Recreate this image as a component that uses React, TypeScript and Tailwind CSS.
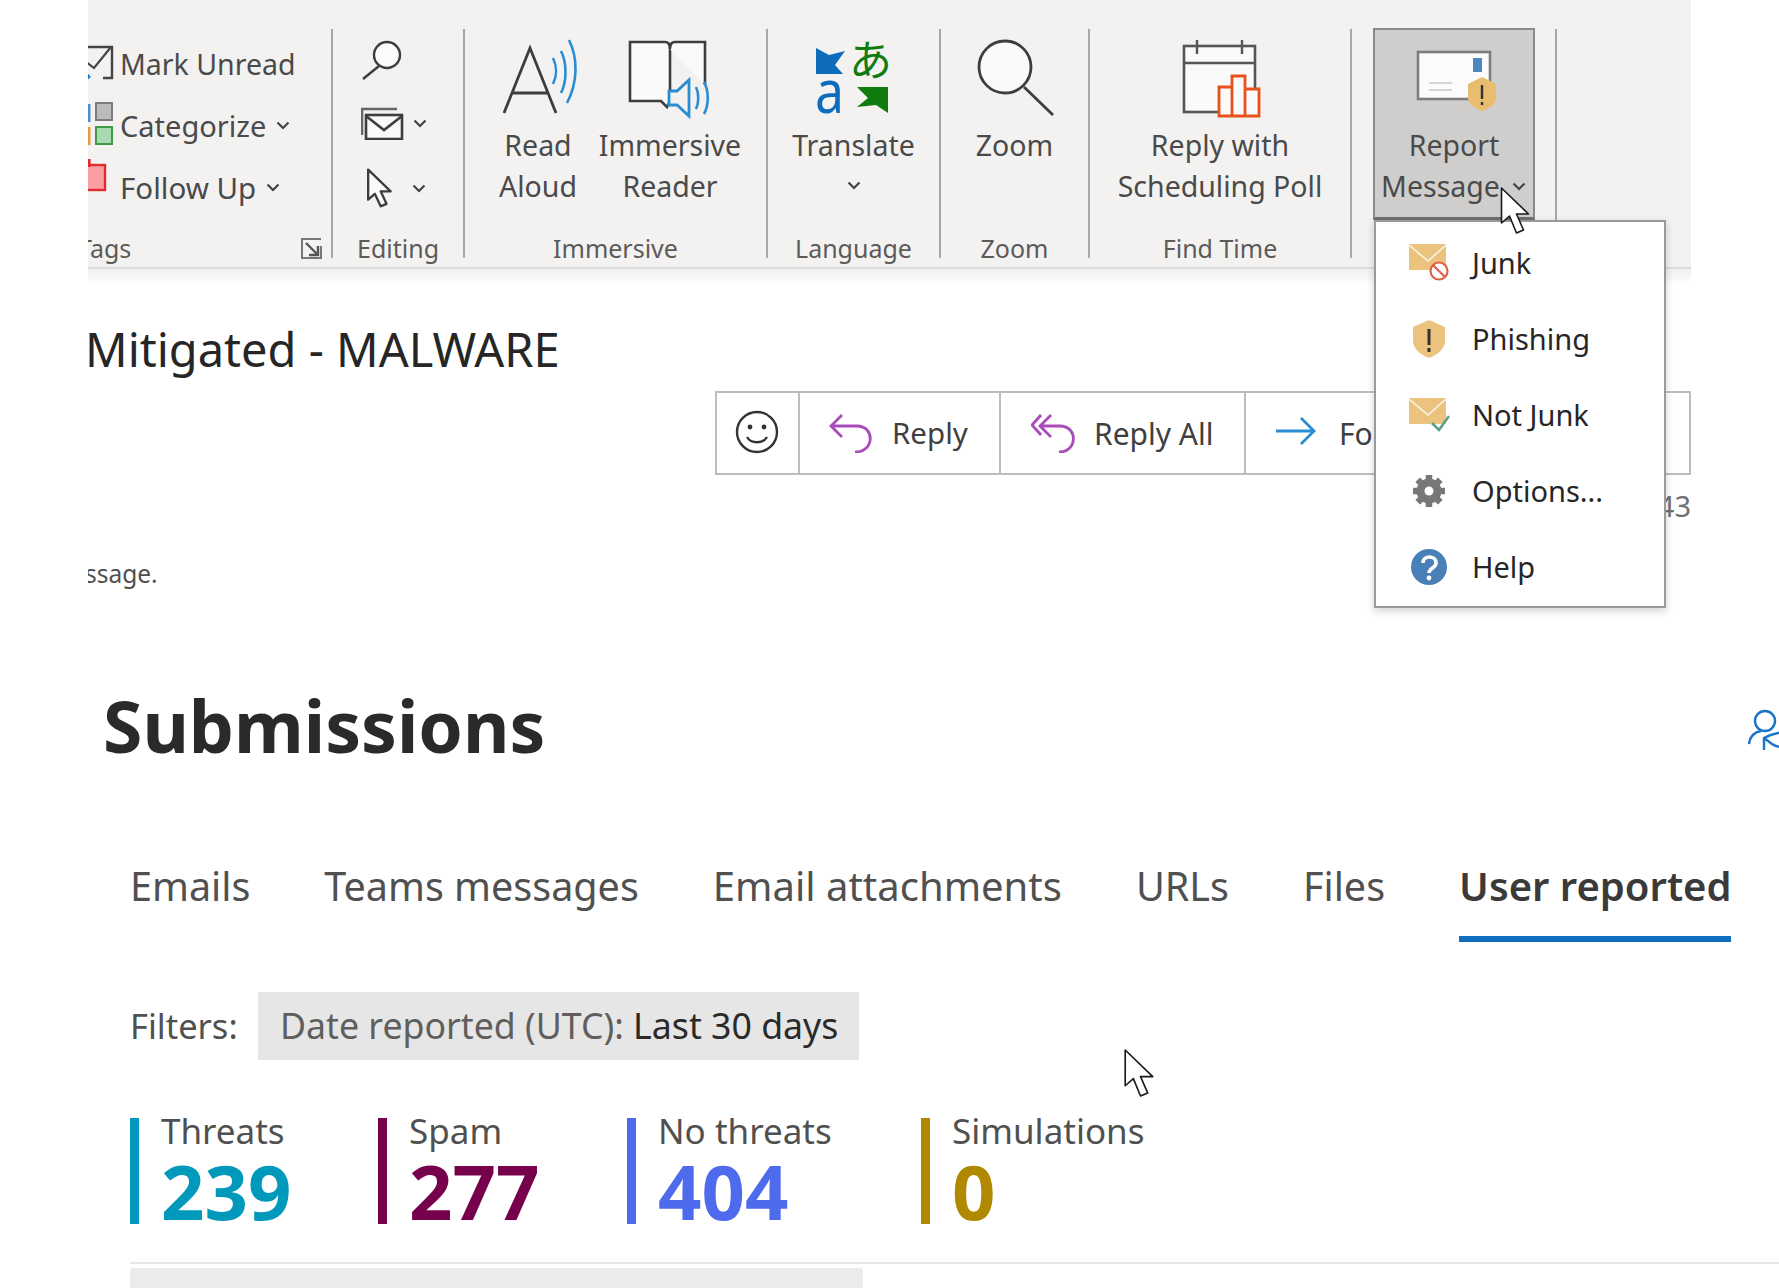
import React from "react";

const Chev = ({ className = "" }: { className?: string }) => (
  <svg width="16" height="11" viewBox="0 0 16 11" className={"block shrink-0 " + className} fill="none" stroke="#444" strokeWidth="2.2">
    <path d="M2.5 2.5 8 8 13.5 2.5" />
  </svg>
);

const Group = ({ w, label, children, labelClass = "text-center" }: { w: string; label?: string; children: React.ReactNode; labelClass?: string }) => (
  <div className={"relative flex flex-col h-[229px] shrink-0 border-r-2 border-[#a8a7a6] " + w}>
    <div className="flex-1 flex min-h-0">{children}</div>
    <div className={"h-[18px] leading-[16px] text-[25px] text-[#5c5b5a] whitespace-nowrap " + labelClass}>{label}</div>
  </div>
);

const Big = ({ w, icon, lines, chev, inlineChev, cls = "" }: { w: string; icon: React.ReactNode; lines: string[]; chev?: boolean; inlineChev?: boolean; cls?: string }) => (
  <div className={"flex flex-col items-center shrink-0 " + w + " " + cls}>
    <div className="h-[96px] w-full flex justify-center shrink-0">{icon}</div>
    {lines.map((l, i) => (
      <div key={l} className="h-[41px] flex items-center leading-[41px] text-[28.5px] text-[#4a4a4a] whitespace-nowrap">
        {l}
        {inlineChev && i === lines.length - 1 && <Chev className="ml-[11px]" />}
      </div>
    ))}
    {chev && <Chev className="mt-[14px]" />}
  </div>
);

const TagRow = ({ icon, text, chevClass, size = "text-[28.5px]" }: { icon: React.ReactNode; text: string; chevClass?: string; size?: string }) => (
  <div className="h-[62px] flex items-center">
    <div className="w-[32px] h-[62px] shrink-0 overflow-hidden">{icon}</div>
    <span className={"text-[#4a4a4a] whitespace-nowrap " + size}>{text}</span>
    {chevClass && <Chev className={chevClass} />}
  </div>
);

const Cursor = ({ className, w, h }: { className: string; w: number; h: number }) => (
  <svg width={w} height={h} viewBox="0 0 32 48" className={className} fill="#fff" stroke="#1a1a1a" strokeWidth="1.6" strokeLinejoin="round">
    <path d="M2 1v35l8-7 7 17 7-3-7-16h12z" />
  </svg>
);

const MenuItem = ({ icon, text }: { icon: React.ReactNode; text: string }) => (
  <div className="h-[76px] flex items-center">
    <div className="w-[96px] h-[50px] shrink-0 flex items-center justify-center pl-[10px]">{icon}</div>
    <span className="text-[29px] text-[#262626] whitespace-nowrap">{text}</span>
  </div>
);

const Stat = ({ label, value, bar, text, w }: { label: string; value: string; bar: string; text: string; w: string }) => (
  <div className={"flex h-[106px] shrink-0 " + w}>
    <div className={"w-[9px] h-full shrink-0 " + bar} />
    <div className="pl-[22px] flex flex-col">
      <div className="h-[26px] leading-[26px] text-[35px] text-[#505050] whitespace-nowrap">{label}</div>
      <div className={"mt-[17px] h-[60px] leading-[60px] text-[76px] font-bold " + text}>{value}</div>
    </div>
  </div>
);

export default function App() {
  return (
    <div className="relative w-[1779px] h-[1288px] overflow-hidden bg-white font-['Noto_Sans',sans-serif]">
      <div className="ml-[88px] w-[1603px] overflow-hidden h-[589px]">
        {/* Ribbon */}
        <div className="h-[269px] pt-[29px] bg-[#f3f2f1] border-b-2 border-[#dcdcdc] flex">
          <Group w="w-[245px]" label="Tags" labelClass="text-left -ml-[10px]">
            <div className="flex flex-col pt-[4px]">
              <TagRow
                text="Mark Unread"
                icon={
                  <svg width="32" height="62" viewBox="0 0 32 62" fill="none">
                    <path d="M0 14H24V45H15" stroke="#444" strokeWidth="2.4" />
                    <path d="M-3 28 6 35 23 14" stroke="#444" strokeWidth="2.2" />
                    <path d="M-3 37 3 44-3 49z" fill="#1b87d4" />
                  </svg>
                }
              />
              <TagRow
                text="Categorize"
                size="text-[29px]"
                chevClass="ml-[9px] -mt-[2px]"
                icon={
                  <svg width="32" height="62" viewBox="0 0 32 62">
                    <rect x="0" y="9" width="2.5" height="18" fill="#4a90d0" />
                    <rect x="0" y="32" width="2.5" height="18" fill="#e89a3c" />
                    <rect x="8" y="8" width="16" height="17" fill="#bdbbb9" stroke="#7d7d7d" strokeWidth="2" />
                    <rect x="8" y="32" width="16" height="17" fill="#a9d9ae" stroke="#3c9a48" strokeWidth="2" />
                  </svg>
                }
              />
              <TagRow
                text="Follow Up"
                size="text-[29.5px]"
                chevClass="ml-[9px] -mt-[2px]"
                icon={
                  <svg width="32" height="62" viewBox="0 0 32 62">
                    <rect x="-4" y="8" width="21" height="25" fill="#fb9ea4" stroke="#e02b2f" strokeWidth="2.4" />
                    <rect x="0" y="2" width="2.6" height="8" fill="#e02b2f" />
                  </svg>
                }
              />
            </div>
            <svg width="22" height="21" viewBox="0 0 22 21" className="absolute left-[213px] top-[209px]" fill="none" stroke="#555" strokeWidth="2">
              <path d="M20 8V20H1V1H20" stroke="#777" />
              <path d="M5 5 17 17M17 8V17H8" strokeWidth="2.4" />
            </svg>
          </Group>

          <Group w="w-[132px]" label="Editing">
            <div className="flex flex-col pl-[28px]">
              <svg width="42" height="41" viewBox="0 0 42 41" className="block mt-[10px]" fill="none" stroke="#3d3d3d" strokeWidth="2.4">
                <circle cx="26" cy="16" r="13" fill="#fbfbfb" />
                <path d="M18 27 2 40" />
              </svg>
              <div className="flex items-center mt-[27px] h-[33px]">
                <svg width="44" height="33" viewBox="0 0 44 33" className="block" fill="none" stroke="#3d3d3d" strokeWidth="2.6">
                  <path d="M1 28V2H36" stroke="#666" />
                  <rect x="5" y="8" width="36" height="24" fill="#fafafa" />
                  <path d="M5 9 23 23 41 9" />
                </svg>
                <Chev className="ml-[7px]" />
              </div>
              <div className="flex items-center mt-[28px] h-[40px]">
                <svg width="32" height="40" viewBox="0 0 32 48" className="block ml-[2px]" fill="#fafafa" stroke="#3d3d3d" strokeWidth="2.8" strokeLinejoin="round">
                  <path d="M3 2v36l8-7 7 15 7-3-7-15h12z" />
                </svg>
                <Chev className="ml-[16px]" />
              </div>
            </div>
          </Group>

          <Group w="w-[303px]" label="Immersive">
            <div className="flex pl-[33px] gap-[19px]">
              <Big
                w="w-[80px]"
                lines={["Read", "Aloud"]}
                icon={
                  <svg width="80" height="96" viewBox="0 0 80 96" fill="none" className="block">
                    <path d="M6 84 32 19 58 84M14 64H50" stroke="#3d3d3d" strokeWidth="2.8" />
                    <path d="M55 29c4 8 4 18 0 26M63 22c6 12 6 30 0 42M71 11c9 18 9 42-2 63" stroke="#2a8dd4" strokeWidth="2.6" />
                  </svg>
                }
              />
              <Big
                w="w-[146px]"
                lines={["Immersive", "Reader"]}
                icon={
                  <svg width="146" height="96" viewBox="0 0 146 96" fill="none" className="block">
                    <path d="M33 13H68C72 13 73 16 73 20V70C73 73 71 76 70 78L64 72H33z" fill="#fafafa" stroke="#3d3d3d" strokeWidth="2.6" />
                    <path d="M73 20C73 16 74 13 78 13H108V56" fill="#fafafa" stroke="#3d3d3d" strokeWidth="2.6" />
                    <path d="M72 62H80L92 51V87L80 76H72z" fill="#f3f2f1" stroke="#2a8dd4" strokeWidth="2.8" />
                    <path d="M99 58c3 6 3 16 0 22M107 53c5 9 5 23 0 32" stroke="#2a8dd4" strokeWidth="2.6" />
                  </svg>
                }
              />
            </div>
          </Group>

          <Group w="w-[173px]" label="Language">
            <div className="flex-1">
              <Big
                w="w-full"
                chev
                lines={["Translate"]}
                icon={
                  <svg width="76" height="96" viewBox="0 0 76 96" className="block">
                    <path d="M0 19 13 26 29 22 19 36 27 45H0z" fill="#0f6cbd" />
                    <text x="33" y="47" fontSize="43" fill="#107c10" fontFamily="'Noto Sans CJK JP',sans-serif">あ</text>
                    <text x="-1" y="84" fontSize="60" fill="#0f6cbd" textLength="29" lengthAdjust="spacingAndGlyphs" fontFamily="'Noto Sans',sans-serif">a</text>
                    <path d="M72 58V84L60 76 41 78 52 69 41 58z" fill="#107c10" />
                  </svg>
                }
              />
            </div>
          </Group>

          <Group w="w-[149px]" label="Zoom">
            <div className="flex-1">
              <Big
                w="w-full"
                lines={["Zoom"]}
                icon={
                  <svg width="78" height="96" viewBox="0 0 78 96" fill="none" className="block ml-[3px]" stroke="#3d3d3d" strokeWidth="2.8">
                    <circle cx="28" cy="38" r="26" fill="#fafafa" />
                    <path d="M47 58 76 86" />
                  </svg>
                }
              />
            </div>
          </Group>

          <Group w="w-[262px]" label="Find Time">
            <div className="flex-1">
              <Big
                w="w-full"
                lines={["Reply with", "Scheduling Poll"]}
                icon={
                  <svg width="80" height="96" viewBox="0 0 80 96" fill="none" className="block ml-[4px]">
                    <rect x="2" y="17" width="71" height="66" fill="#fafafa" stroke="#555" strokeWidth="2.6" />
                    <path d="M2 34H73M15 11V25M60 11V25" stroke="#555" strokeWidth="2.4" />
                    <path d="M37 87V58H50V47H63V60H77V87zM50 58V87M63 60V87" fill="#fafafa" stroke="#e8501c" strokeWidth="2.8" />
                  </svg>
                }
              />
            </div>
          </Group>

          <Group w="w-[205px]">
            <div className="pl-[21px]">
              <div className="h-[192px] -mt-[1px] border-2 border-[#8b8a8a] border-b-[3px] border-b-[#6f6f6f] bg-[#cfcecd]">
                <Big
                  w="w-[158px]"
                  lines={["Report", "Message"]}
                  inlineChev
                  cls="-mt-[1px]"
                  icon={
                    <svg width="84" height="96" viewBox="0 0 84 96" fill="none" className="block mt-[1px]">
                      <rect x="6" y="22" width="72" height="47" fill="#fbfbfb" stroke="#7d7d7d" strokeWidth="2.6" />
                      <rect x="61" y="28" width="9" height="14" fill="#4a86c0" />
                      <path d="M17 53H40M17 60H40" stroke="#d5d5d5" strokeWidth="2" />
                      <path d="M70 47 84 54V68C84 74 77 79 70 81 63 79 56 74 56 68V54z" fill="#e9bd6f" />
                      <path d="M70 55V69M70 72V75" stroke="#333" strokeWidth="2.4" />
                    </svg>
                  }
                />
              </div>
            </div>
          </Group>
        </div>
        <div className="h-[16px] bg-gradient-to-b from-[#f0f0f0] to-white -mb-[16px]" />

        {/* Message head */}
        <div className="mt-[55px] h-[50px] leading-[50px] text-[47px] text-[#262626] whitespace-nowrap -ml-[3px]">Mitigated - MALWARE</div>

        <div className="mt-[17px] ml-[627px] h-[84px] w-[976px] border-2 border-[#bdbdbd] flex items-stretch">
          <div className="w-[83px] shrink-0 border-r-2 border-[#bdbdbd] flex items-center justify-center">
            <svg width="44" height="44" viewBox="0 0 44 44" fill="none" stroke="#333" strokeWidth="2.4" className="-ml-[2px] -mt-[2px]">
              <circle cx="22" cy="22" r="20" />
              <circle cx="15" cy="17" r="2.4" fill="#333" stroke="none" />
              <circle cx="29" cy="17" r="2.4" fill="#333" stroke="none" />
              <path d="M12 27c4 7 16 7 20 0" />
            </svg>
          </div>
          <div className="w-[201px] shrink-0 border-r-2 border-[#bdbdbd] flex items-center pl-[29px]">
            <svg width="44" height="40" viewBox="0 0 44 40" fill="none" stroke="#a94bb8" strokeWidth="2.8" className="shrink-0">
              <path d="M13 2 2 13 13 24M2 13H28C46 13 46 39 26 39" />
            </svg>
            <span className="ml-[19px] text-[29.5px] text-[#3f3f3f]">Reply</span>
          </div>
          <div className="w-[245px] shrink-0 border-r-2 border-[#bdbdbd] flex items-center pl-[30px]">
            <svg width="44" height="40" viewBox="0 0 44 40" fill="none" stroke="#a94bb8" strokeWidth="2.8" className="shrink-0">
              <path d="M10 2 1 12 10 22M20 2 9 13 20 24M9 13H29C47 13 47 39 28 39" />
            </svg>
            <span className="ml-[19px] text-[30px] text-[#3f3f3f] whitespace-nowrap">Reply All</span>
          </div>
          <div className="flex-1 flex items-center pl-[30px] relative">
            <svg width="40" height="30" viewBox="0 0 40 30" fill="none" stroke="#2a8dd4" strokeWidth="2.8" className="shrink-0 -mt-[4px]">
              <path d="M0 15H38M25 2 38 15 25 28" />
            </svg>
            <span className="ml-[23px] text-[30px] text-[#3f3f3f]">Forward</span>
            <span className="absolute right-[24px] top-[36px] w-[3px] h-[3px] bg-[#666]" />
          </div>
        </div>

        <div className="mt-[16px] h-[30px] leading-[30px] text-right text-[29px] text-[#707070] whitespace-nowrap">12:43</div>
        <div className="mt-[38px] h-[30px] leading-[30px] text-[24.5px] text-[#505050] whitespace-nowrap -ml-[3px]">ssage.</div>
      </div>

      {/* Submissions */}
      <div className="mt-[97px] h-[80px] flex items-center justify-between pl-[103px]">
        <h1 className="text-[71.5px] leading-[80px] font-bold text-[#2b2a29]">Submissions</h1>
        <svg width="44" height="44" viewBox="0 0 44 44" fill="none" stroke="#1a73c9" strokeWidth="2.4" className="shrink-0 -mr-[13px] mt-[8px]">
          <circle cx="17" cy="13" r="10" />
          <path d="M1 36C2 28 7 24 13 23" />
          <path d="M16 42V30C24 26 32 24 40 24M16 30 24 36C30 40 36 40 44 38" />
        </svg>
      </div>

      <div className="mt-[100px] ml-[130px] flex h-[76px] gap-[74px]">
        <div className="h-[40px] leading-[40px] text-[39.5px] text-[#505050] whitespace-nowrap">Emails</div>
        <div className="h-[40px] leading-[40px] text-[39.5px] text-[#505050] whitespace-nowrap">Teams messages</div>
        <div className="h-[40px] leading-[40px] text-[40px] text-[#505050] whitespace-nowrap">Email attachments</div>
        <div className="h-[40px] leading-[40px] text-[39.5px] text-[#505050] whitespace-nowrap">URLs</div>
        <div className="h-[40px] leading-[40px] text-[39.5px] text-[#505050] whitespace-nowrap">Files</div>
        <div className="w-[272px] h-[76px] border-b-[6px] border-[#106ebe] leading-[40px] text-[40px] font-semibold text-[#3b3a39] whitespace-nowrap">User reported</div>
      </div>

      <div className="mt-[50px] ml-[130px] h-[68px] flex items-center">
        <span className="text-[34.5px] text-[#505050] w-[128px]">Filters:</span>
        <div className="h-[68px] w-[601px] bg-[#e6e6e6] pl-[22px] flex items-center text-[35.7px] whitespace-nowrap">
          <span className="text-[#605e5c]">Date reported (UTC):&nbsp;</span>
          <span className="text-[#2b2a29]">Last 30 days</span>
        </div>
      </div>

      <div className="mt-[58px] ml-[130px] flex">
        <Stat w="w-[248px]" label="Threats" value="239" bar="bg-[#0099bc]" text="text-[#0099bc]" />
        <Stat w="w-[249px]" label="Spam" value="277" bar="bg-[#77004d]" text="text-[#77004d]" />
        <Stat w="w-[294px]" label="No threats" value="404" bar="bg-[#4f6bed]" text="text-[#4f6bed]" />
        <Stat w="w-[280px]" label="Simulations" value="0" bar="bg-[#b08900]" text="text-[#b08900]" />
      </div>

      <div className="mt-[38px] ml-[130px] h-[2px] bg-[#e6e6e6]" />
      <div className="mt-[4px] ml-[130px] w-[733px] h-[24px] rounded-t-[3px] bg-[#ebebeb]" />

      {/* Report Message dropdown */}
      <div className="absolute left-[1374px] top-[220px] w-[292px] h-[388px] bg-white border-2 border-[#9a9a9a] shadow-[0_3px_8px_rgba(0,0,0,0.18)] pt-[3px]">
        <MenuItem
          text="Junk"
          icon={
            <svg width="42" height="40" viewBox="0 0 42 40">
              <rect x="1" y="1" width="37" height="26" fill="#ebc37e" />
              <path d="M1 2 20 18 38 2" fill="none" stroke="#fdf6e6" strokeWidth="1.6" />
              <circle cx="31" cy="28" r="8.5" fill="#fff" stroke="#e0604a" strokeWidth="2.2" />
              <path d="M25 22 37 34" stroke="#e0604a" strokeWidth="2.2" />
            </svg>
          }
        />
        <MenuItem
          text="Phishing"
          icon={
            <svg width="32" height="38" viewBox="0 0 32 38">
              <path d="M16 0 32 7V21C32 29 24 35 16 38 8 35 0 29 0 21V7z" fill="#ebc37e" />
              <path d="M16 9V25M16 28V32" stroke="#333" strokeWidth="3" />
            </svg>
          }
        />
        <MenuItem
          text="Not Junk"
          icon={
            <svg width="42" height="36" viewBox="0 0 42 36">
              <rect x="1" y="1" width="37" height="26" fill="#ebc37e" />
              <path d="M1 2 20 18 38 2" fill="none" stroke="#fdf6e6" strokeWidth="1.6" />
              <path d="M24 26 31 33 41 19" fill="none" stroke="#5f9e86" strokeWidth="2.6" />
            </svg>
          }
        />
        <MenuItem
          text="Options..."
          icon={
            <svg width="32" height="32" viewBox="0 0 32 32">
              <circle cx="16" cy="16" r="8.5" fill="none" stroke="#777" strokeWidth="8" />
              <path d="M16 0V32M0 16H32M4.7 4.7 27.3 27.3M27.3 4.7 4.7 27.3" stroke="#777" strokeWidth="6.5" strokeDasharray="6 20" />
            </svg>
          }
        />
        <MenuItem
          text="Help"
          icon={
            <svg width="36" height="36" viewBox="0 0 36 36">
              <circle cx="18" cy="18" r="18" fill="#4a80b8" />
              <path d="M12 14c0-8 13-8 13 0 0 5-7 5-7 10" fill="none" stroke="#fff" strokeWidth="3.6" />
              <circle cx="18" cy="29" r="2.4" fill="#fff" />
            </svg>
          }
        />
      </div>

      <Cursor className="absolute left-[1498px] top-[187px]" w={35} h={48} />
      <Cursor className="absolute left-[1123px] top-[1049px]" w={33} h={49} />
    </div>
  );
}
